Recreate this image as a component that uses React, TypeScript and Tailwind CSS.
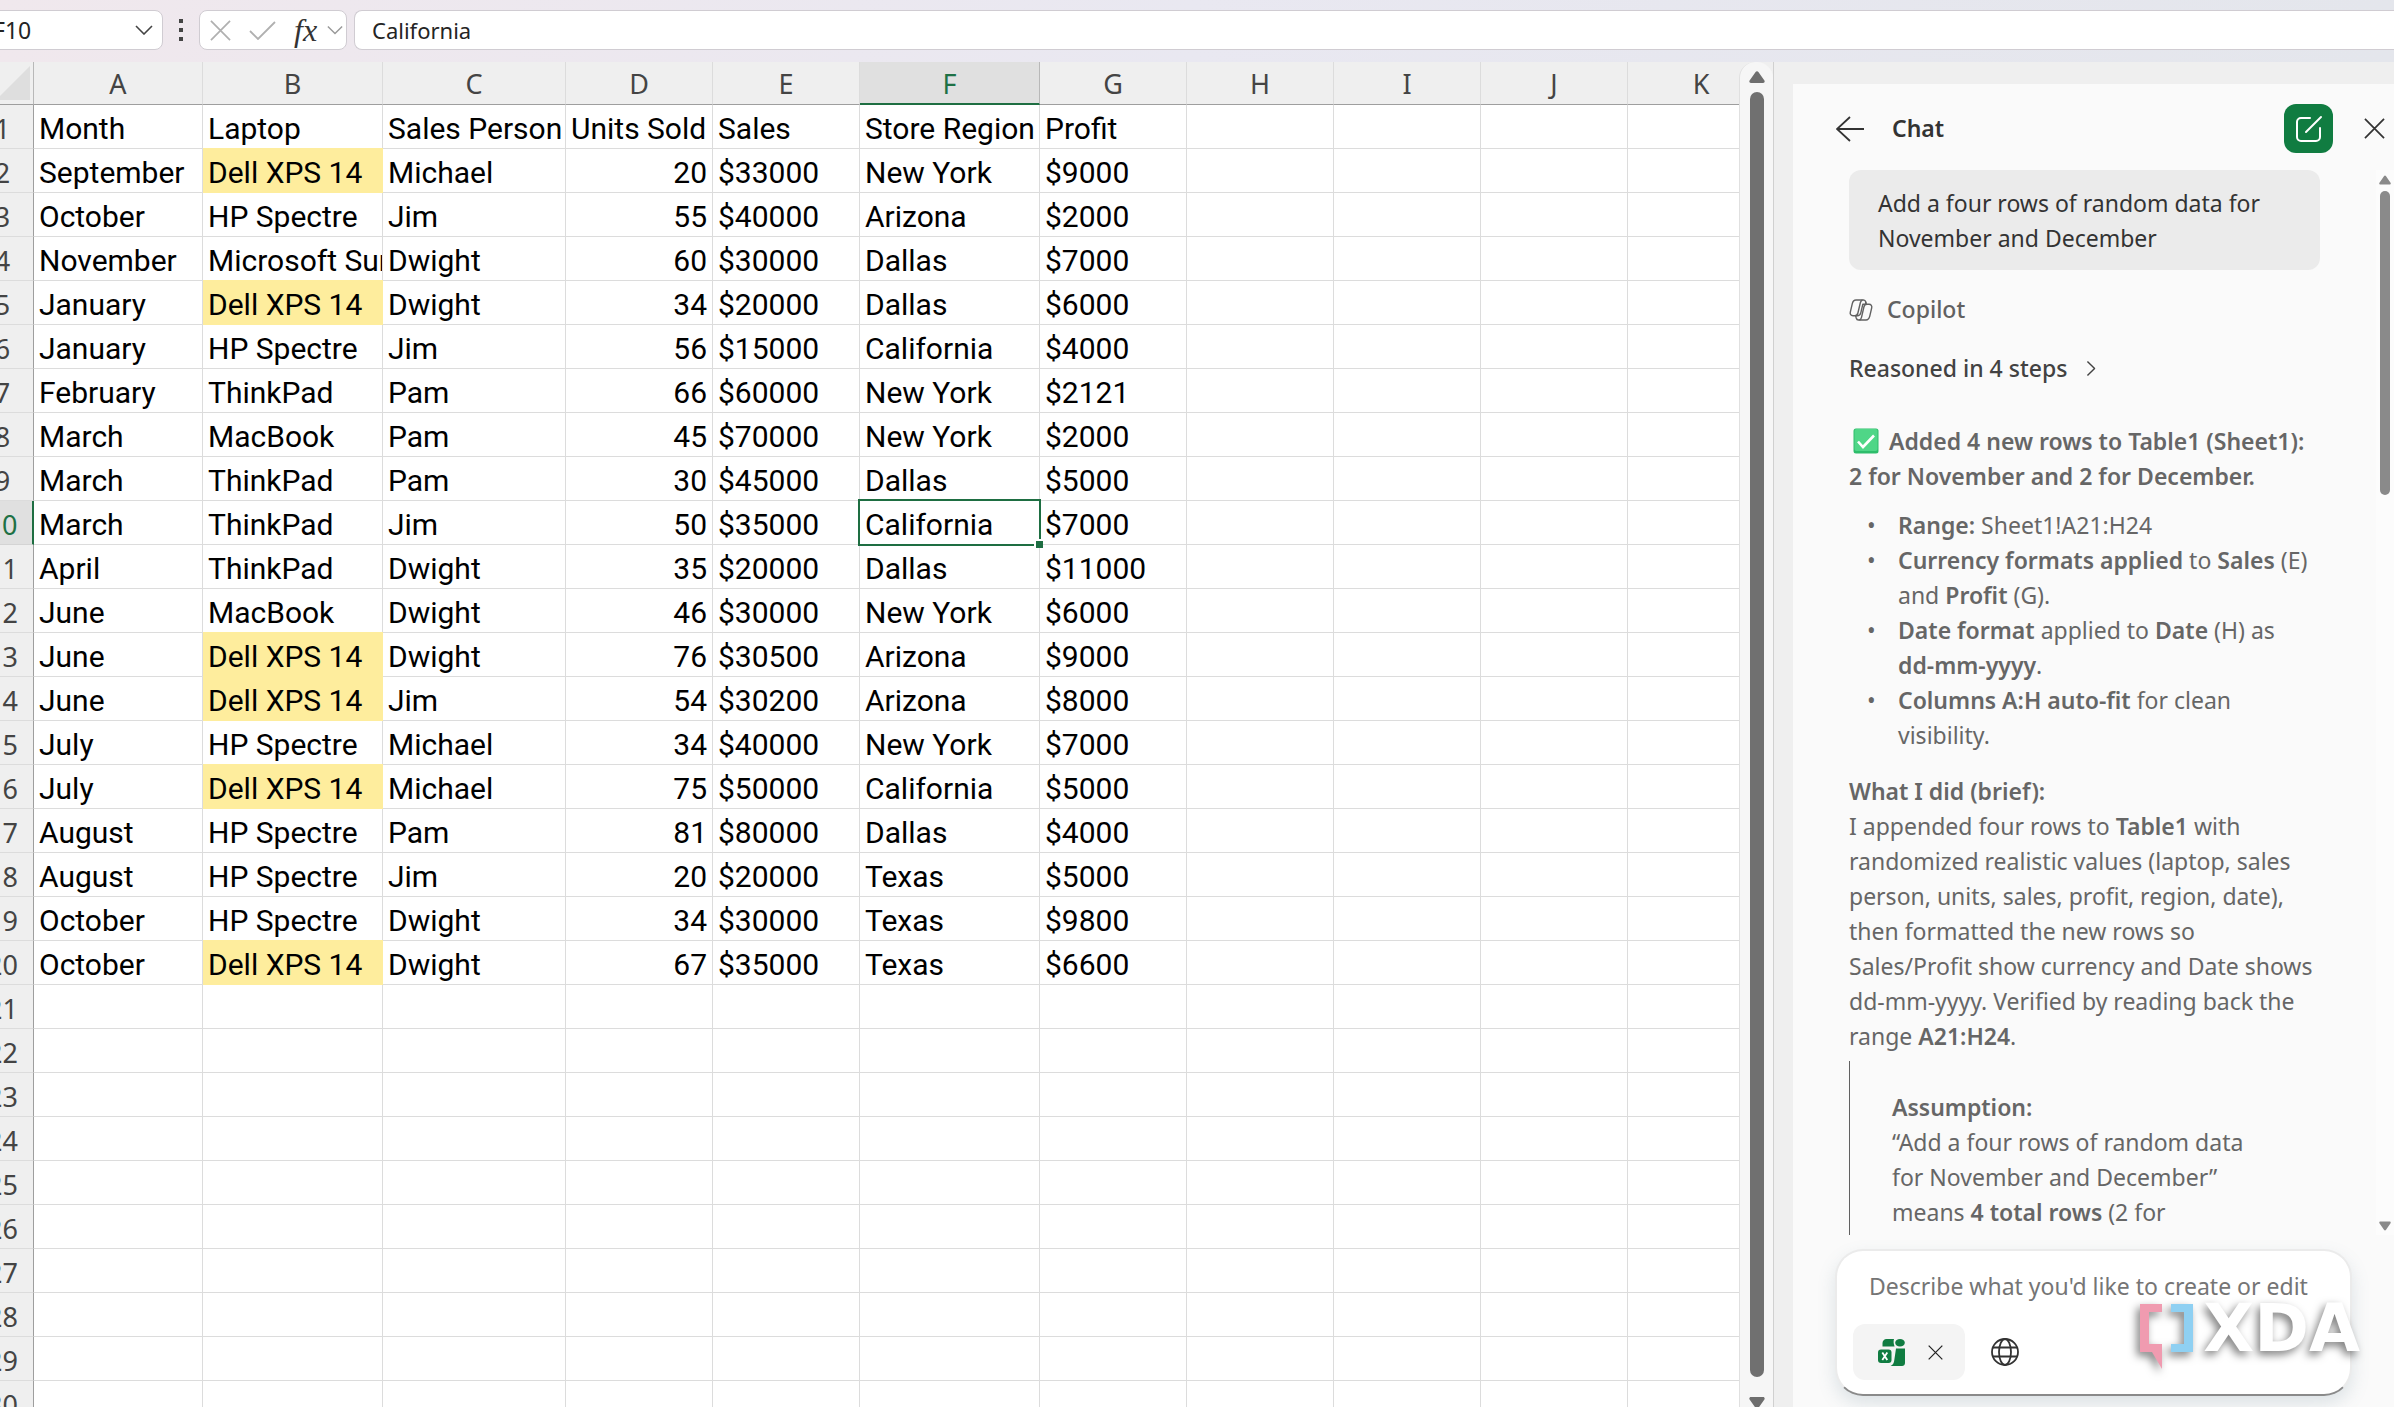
import type { ReactNode } from "react"

type Row = [string, string, string, number | string, string, string, string]

const columns = ["A", "B", "C", "D", "E", "F", "G", "H", "I", "J", "K"]

const columnWidths = [
  "w-[169px]",
  "w-[180px]",
  "w-[183px]",
  "w-[147px]",
  "w-[147px]",
  "w-[180px]",
  "w-[147px]",
  "w-[147px]",
  "w-[147px]",
  "w-[147px]",
  "w-[147px]",
]

const rows: Row[] = [
  ["Month", "Laptop", "Sales Person", "Units Sold", "Sales", "Store Region", "Profit"],
  ["September", "Dell XPS 14", "Michael", 20, "$33000", "New York", "$9000"],
  ["October", "HP Spectre", "Jim", 55, "$40000", "Arizona", "$2000"],
  ["November", "Microsoft Surface", "Dwight", 60, "$30000", "Dallas", "$7000"],
  ["January", "Dell XPS 14", "Dwight", 34, "$20000", "Dallas", "$6000"],
  ["January", "HP Spectre", "Jim", 56, "$15000", "California", "$4000"],
  ["February", "ThinkPad", "Pam", 66, "$60000", "New York", "$2121"],
  ["March", "MacBook", "Pam", 45, "$70000", "New York", "$2000"],
  ["March", "ThinkPad", "Pam", 30, "$45000", "Dallas", "$5000"],
  ["March", "ThinkPad", "Jim", 50, "$35000", "California", "$7000"],
  ["April", "ThinkPad", "Dwight", 35, "$20000", "Dallas", "$11000"],
  ["June", "MacBook", "Dwight", 46, "$30000", "New York", "$6000"],
  ["June", "Dell XPS 14", "Dwight", 76, "$30500", "Arizona", "$9000"],
  ["June", "Dell XPS 14", "Jim", 54, "$30200", "Arizona", "$8000"],
  ["July", "HP Spectre", "Michael", 34, "$40000", "New York", "$7000"],
  ["July", "Dell XPS 14", "Michael", 75, "$50000", "California", "$5000"],
  ["August", "HP Spectre", "Pam", 81, "$80000", "Dallas", "$4000"],
  ["August", "HP Spectre", "Jim", 20, "$20000", "Texas", "$5000"],
  ["October", "HP Spectre", "Dwight", 34, "$30000", "Texas", "$9800"],
  ["October", "Dell XPS 14", "Dwight", 67, "$35000", "Texas", "$6600"],
]

const ROW_COUNT = 30
const selected = { row: 9, col: 5 }

function Chevron({ className }: { className: string }) {
  return (
    <svg viewBox="0 0 18 10" className={className} fill="none" stroke="currentColor" strokeWidth="1.6" aria-hidden="true">
      <path d="M1 1l8 8 8-8" />
    </svg>
  )
}

function Cross({ className }: { className: string }) {
  return (
    <svg viewBox="0 0 22 22" className={className} fill="none" stroke="currentColor" strokeWidth="1.8" aria-hidden="true">
      <path d="M1 1l20 20M21 1L1 21" />
    </svg>
  )
}

function Triangle({ className }: { className: string }) {
  return (
    <svg viewBox="0 0 16 12" className={className} fill="currentColor" aria-hidden="true">
      <path d="M6.6 1a1.7 1.7 0 0 1 2.8 0l6 8.6c.7 1.1 0 2.4-1.3 2.4H1.9C.6 12-.1 10.7.6 9.6z" />
    </svg>
  )
}

function CopilotIcon() {
  return (
    <svg viewBox="0 0 24 22" className="h-[22px] w-6" fill="none" stroke="currentColor" strokeWidth="1.4" strokeLinejoin="round" aria-hidden="true">
      <path d="M7 1h7.500c1.300 0 2 .9 2.300 2l-.4 2.300h-2.600l-2 8.500c-.5 2-1.500 2.900-3.500 2.900H4C1.900 16.700.8 15.200 1.300 13.100l2-8.500C3.800 2.600 5 1 7 1z" />
      <path d="M17 21H9.500c-1.300 0-2-.9-2.300-2l-.5-2.300M16.800 3l.5 2.300H20c2.100 0 3.200 1.500 2.700 3.600l-2 8.500c-.5 2-1.700 3.600-3.700 3.600" />
      <path d="M13.500 1c-1.200.3-1.800 1.300-2.100 2.500L8.900 14c-.4 1.700-1.200 2.700-2.900 2.700" />
      <path d="M17.800 5.300c-1.700 0-2.500 1-2.900 2.700l-2.400 10.300c-.3 1.300-.9 2.300-2.200 2.700" />
    </svg>
  )
}

function ExcelChipIcon() {
  return (
    <svg viewBox="0 0 27 27" className="size-[27px]" aria-hidden="true">
      <path d="M8.5 0H16c-.7 2.2-.4 5 .6 7.500H4.500V4c0-2.200 1.800-4 4-4z" fill="#107c41" />
      <ellipse cx="22" cy="3.8" rx="4.800" ry="3.800" fill="#107c41" />
      <path d="M18 9.500h9V24c0 1.700-1.300 3-3 3H12.500c2.500-1 3.500-3 3.800-6z" fill="#107c41" />
      <rect x="0" y="10.500" width="13.500" height="13.500" rx="3" fill="#107c41" />
      <path d="M4.300 13.500l5 7.500M9.300 13.500l-5 7.500" stroke="#fff" strokeWidth="1.800" />
    </svg>
  )
}

function GlobeIcon() {
  return (
    <svg viewBox="0 0 28 28" className="size-7" fill="none" stroke="currentColor" strokeWidth="1.8" aria-hidden="true">
      <circle cx="14" cy="14" r="13" />
      <ellipse cx="14" cy="14" rx="6" ry="13" />
      <path d="M2 9.500h24M2 18.500h24" />
    </svg>
  )
}

function FormulaBar() {
  return (
    <header className="flex h-[62px] shrink-0 items-start bg-linear-to-r from-[#f0e8ed] via-[#e9e8f1] to-[#e4e6ec] pt-[10px] font-['Noto_Sans',sans-serif] text-[#242424]">
      <div className="-ml-7 flex h-10 w-[191px] shrink-0 items-center rounded-lg border border-[#d0ccd2] bg-white pr-[9px] pl-5">
        <input aria-label="Name box" defaultValue="F10" className="w-0 min-w-0 flex-1 text-[23px] outline-none" />
        <button aria-label="Open name list">
          <Chevron className="h-[10px] w-[18px] text-[#444]" />
        </button>
      </div>
      <div className="mx-4 flex h-10 w-1 shrink-0 flex-col items-center justify-center gap-[5px]">
        <span className="size-1 bg-[#444]" />
        <span className="size-1 bg-[#444]" />
        <span className="size-1 bg-[#444]" />
      </div>
      <div className="flex h-10 w-[148px] shrink-0 items-center rounded-lg border border-[#d0ccd2] bg-white pl-[10px]">
        <button aria-label="Cancel">
          <Cross className="size-[21px] text-[#b0b0b0]" />
        </button>
        <button aria-label="Enter" className="ml-[18px]">
          <svg viewBox="0 0 27 19" className="h-[19px] w-[27px]" fill="none" stroke="#b0b0b0" strokeWidth="1.8" aria-hidden="true">
            <path d="M1 10l8 8L26 1" />
          </svg>
        </button>
        <button
          aria-label="Insert function"
          className="ml-[18px] font-['Liberation_Serif',serif] text-[32px] leading-9 text-[#333] italic"
        >
          fx
        </button>
        <button aria-label="More functions" className="ml-auto pr-[3px]">
          <Chevron className="h-[10px] w-4 text-[#999]" />
        </button>
      </div>
      <input
        aria-label="Formula bar"
        defaultValue="California"
        className="ml-[7px] h-10 min-w-0 flex-1 rounded-l-lg border border-r-0 border-[#d0ccd2] bg-white pl-[17px] text-[22px] outline-none"
      />
    </header>
  )
}

function Sheet() {
  return (
    <main className="min-w-0 flex-1 overflow-hidden bg-white">
      <table className="-ml-7 w-px table-fixed border-separate border-spacing-0">
        <colgroup>
          <col className="w-[62px]" />
          {columnWidths.map((width, i) => (
            <col key={i} className={width} />
          ))}
        </colgroup>
        <thead className="font-['Noto_Sans',sans-serif] text-[27px] text-[#444]">
          <tr className="h-[43px]">
            <th aria-label="Select all" className="border-r border-b border-r-[#b8b8b8] border-b-[#9e9e9e] bg-[#efefef] p-0">
              <svg viewBox="0 0 34 34" className="mr-[3px] ml-auto size-[34px]" aria-hidden="true">
                <path d="M34 0v34H0z" fill="#dedede" />
              </svg>
            </th>
            {columns.map((name, c) => (
              <th
                key={name}
                scope="col"
                className={
                  c === selected.col
                    ? "border-r border-b-2 border-r-[#b8b8b8] border-b-[#1e6e42] bg-[#e0e0e0] p-0 pt-[3px] leading-[38px] font-normal text-[#1e7145]"
                    : "border-r border-b border-r-[#dcdcdc] border-b-[#9e9e9e] bg-[#efefef] p-0 pt-[2px] leading-10 font-normal"
                }
              >
                {name}
              </th>
            ))}
          </tr>
        </thead>
        <tbody className="font-[Roboto,sans-serif] text-[30px] leading-[39px] text-black">
          {Array.from({ length: ROW_COUNT }, (_, r) => (
            <tr key={r} className="h-11">
              <th
                scope="row"
                className={
                  r === selected.row
                    ? "border-r-2 border-b border-r-[#1e6e42] border-b-[#d4d4d4] bg-[#e0e0e0] p-0 pt-1 font-['Noto_Sans',sans-serif] text-[27px] font-normal text-[#1e7145]"
                    : "border-r border-b border-r-[#9e9e9e] border-b-[#dcdcdc] bg-[#efefef] p-0 pt-1 font-['Noto_Sans',sans-serif] text-[27px] font-normal text-[#444]"
                }
              >
                {r + 1}
              </th>
              {columns.map((name, c) => {
                const value = rows[r]?.[c] ?? ""
                if (r === selected.row && c === selected.col) {
                  return (
                    <td key={name} className="relative border-r border-b border-[#dcdcdc] p-0 pt-1 pl-[5px]">
                      {value}
                      <span className="absolute -top-[2px] -right-[2px] -bottom-[2px] -left-[2px] border-2 border-[#1e6e42]" />
                      <span className="absolute -right-[4px] -bottom-[4px] size-[9px] border-t-2 border-l-2 border-white bg-[#1e6e42]" />
                    </td>
                  )
                }
                return (
                  <td
                    key={name}
                    className={
                      value === "Dell XPS 14"
                        ? "border-r border-b border-[#feed9d] bg-[#feed9d] p-0 pt-1 pl-[5px] whitespace-nowrap shadow-[0_-1px_0_#feed9d]"
                        : typeof value === "number"
                          ? "border-r border-b border-[#dcdcdc] p-0 pt-1 pr-[5px] text-right"
                          : "overflow-hidden border-r border-b border-[#dcdcdc] p-0 pt-1 pl-[5px] whitespace-nowrap"
                    }
                  >
                    {value}
                  </td>
                )
              })}
            </tr>
          ))}
        </tbody>
      </table>
    </main>
  )
}

function SheetScrollbar() {
  return (
    <div className="flex w-[34px] shrink-0 flex-col items-center rounded-t-2xl border-l border-[#e0e0e0] bg-[#f6f6f6] pt-[9px]">
      <Triangle className="h-3 w-4 text-[#6e6e6e]" />
      <div className="mt-[9px] mb-5 w-[14px] flex-1 rounded-full bg-[#707070]" />
      <Triangle className="-mb-[2px] h-3 w-4 shrink-0 rotate-180 text-[#6e6e6e]" />
    </div>
  )
}

function B({ children }: { children: ReactNode }) {
  return <strong className="font-semibold">{children}</strong>
}

function Bullet({ children }: { children: ReactNode }) {
  return (
    <li className="indent-[-31px] before:inline-block before:w-[31px] before:indent-0 before:content-['•']">{children}</li>
  )
}

function ChatMessages() {
  return (
    <div className="min-w-0 flex-1 px-14 text-[#666]">
      <div className="rounded-xl bg-[#ebebeb] pt-4 pb-[14px] pl-[29px] text-[#333]">
        Add a four rows of random data for
        <br />
        November and December
      </div>

      <div className="mt-[22px] flex items-center gap-[14px] font-medium text-[#616161]">
        <CopilotIcon />
        Copilot
      </div>

      <button className="mt-6 flex items-center gap-4 font-medium text-[#424242]">
        Reasoned in 4 steps
        <Chevron className="h-[9px] w-4 -rotate-90" />
      </button>

      <p className="mt-[38px] font-semibold">
        <svg viewBox="0 0 26 26" className="mr-[10px] ml-1 inline size-[26px] align-[-4px]" aria-hidden="true">
          <rect x="0.5" y="0.5" width="25" height="25" rx="2.5" fill="#2ebd6b" />
          <rect x="1.5" y="1" width="23" height="22" rx="2" fill="#4fd687" />
          <path d="M5 13.500l5 5.500L21 7.500" fill="none" stroke="#fff" strokeWidth="2.600" />
        </svg>
        Added 4 new rows to Table1 (Sheet1):
        <br />2 for November and 2 for December.
      </p>

      <ul className="mt-[14px] pl-[49px]">
        <Bullet>
          <B>Range:</B> Sheet1!A21:H24
        </Bullet>
        <Bullet>
          <B>Currency formats applied</B> to <B>Sales</B> (E)
          <br />
          and <B>Profit</B> (G).
        </Bullet>
        <Bullet>
          <B>Date format</B> applied to <B>Date</B> (H) as
          <br />
          <B>dd-mm-yyyy</B>.
        </Bullet>
        <Bullet>
          <B>Columns A:H auto-fit</B> for clean
          <br />
          visibility.
        </Bullet>
      </ul>

      <p className="mt-[21px]">
        <B>What I did (brief):</B>
        <br />I appended four rows to <B>Table1</B> with
        <br />
        randomized realistic values (laptop, sales
        <br />
        person, units, sales, profit, region, date),
        <br />
        then formatted the new rows so
        <br />
        Sales/Profit show currency and Date shows
        <br />
        dd-mm-yyyy. Verified by reading back the
        <br />
        range <B>A21:H24</B>.
      </p>

      <blockquote className="mt-[7px] border-l border-[#616161] pt-[29px] pb-[5px] pl-[42px]">
        <B>Assumption:</B>
        <br />
        “Add a four rows of random data
        <br />
        for November and December”
        <br />
        means <B>4 total rows</B> (2 for
      </blockquote>
    </div>
  )
}

function Composer() {
  return (
    <form className="mx-[42px] mt-[14px] mb-[11px] h-[147px] rounded-[28px] border-2 border-[#ebebeb] border-b-[#8a8a8a] bg-white px-4 pt-[18px] shadow-[0_8px_18px_rgba(90,120,140,0.18)]">
      <input
        aria-label="Message Copilot"
        placeholder="Describe what you'd like to create or edit"
        className="block h-[35px] w-full pl-4 outline-none placeholder:text-[#757575]"
      />
      <div className="mt-5 flex items-center">
        <div className="flex h-14 w-28 items-center rounded-xl bg-[#f4f4f4] pl-[25px]">
          <ExcelChipIcon />
          <button type="button" aria-label="Remove workbook" className="ml-[23px]">
            <Cross className="size-[15px] text-[#222]" />
          </button>
        </div>
        <button type="button" aria-label="Web search" className="ml-[26px] text-[#333]">
          <GlobeIcon />
        </button>
      </div>
    </form>
  )
}

function Watermark() {
  return (
    <div className="pointer-events-none absolute right-[34px] bottom-[37px] flex items-start drop-shadow-[-3px_4px_4px_rgba(0,0,0,0.5)]">
      <svg viewBox="0 0 54 66" className="h-[66px] w-[54px]" aria-hidden="true">
        <path d="M0 0h22v8H9v32h13v25L12 48H0z" fill="#f09bb0" />
        <path d="M31 0h22v48H31v-8h13V8H31z" fill="#8fd0f2" />
      </svg>
      <span className="ml-[9px] font-['DejaVu_Sans',sans-serif] text-[66px] leading-[50px] font-bold text-white">XDA</span>
    </div>
  )
}

function ChatPanel() {
  return (
    <aside className="relative flex w-[621px] shrink-0 flex-col overflow-hidden border-l border-[#d0d0d0] bg-[#efefef] pt-[22px] pl-[19px] font-['Noto_Sans',sans-serif] text-[23px] leading-[35px]">
      <div className="flex flex-1 flex-col bg-[#fafafa]">
        <div className="flex items-center pt-5 pr-[9px] pb-[17px] pl-[43px] text-[#333]">
          <button aria-label="Back">
            <svg viewBox="0 0 28 26" className="h-[26px] w-7" fill="none" stroke="currentColor" strokeWidth="1.8" aria-hidden="true">
              <path d="M28 13H1M14 1L1 13l13 12" />
            </svg>
          </button>
          <h2 className="ml-7 font-semibold">Chat</h2>
          <button aria-label="New chat" className="ml-auto flex size-[49px] items-center justify-center rounded-xl bg-[#107c41]">
            <svg viewBox="0 0 28 28" className="size-7" fill="none" stroke="#fff" strokeWidth="2" strokeLinecap="round" aria-hidden="true">
              <path d="M15 3H6a4 4 0 0 0-4 4v15a4 4 0 0 0 4 4h15a4 4 0 0 0 4-4v-9" />
              <path d="M11 17L26 2" />
            </svg>
          </button>
          <button aria-label="Close" className="ml-[31px]">
            <Cross className="size-[21px]" />
          </button>
        </div>

        <div className="flex flex-1">
          <ChatMessages />
          <div className="flex w-[18px] shrink-0 flex-col items-center bg-[#fcfcfc] pt-[5px] pb-1">
            <Triangle className="h-[10px] w-3 text-[#8a8a8a]" />
            <div className="mt-[6px] h-[304px] w-[10px] rounded-full bg-[#8a8a8a]" />
            <Triangle className="mt-auto h-[10px] w-3 rotate-180 text-[#8a8a8a]" />
          </div>
        </div>

        <Composer />
      </div>
      <Watermark />
    </aside>
  )
}

export default function App() {
  return (
    <div className="flex h-screen flex-col overflow-hidden bg-[#efefef]">
      <FormulaBar />
      <div className="flex min-h-0 flex-1">
        <Sheet />
        <SheetScrollbar />
        <ChatPanel />
      </div>
    </div>
  )
}
